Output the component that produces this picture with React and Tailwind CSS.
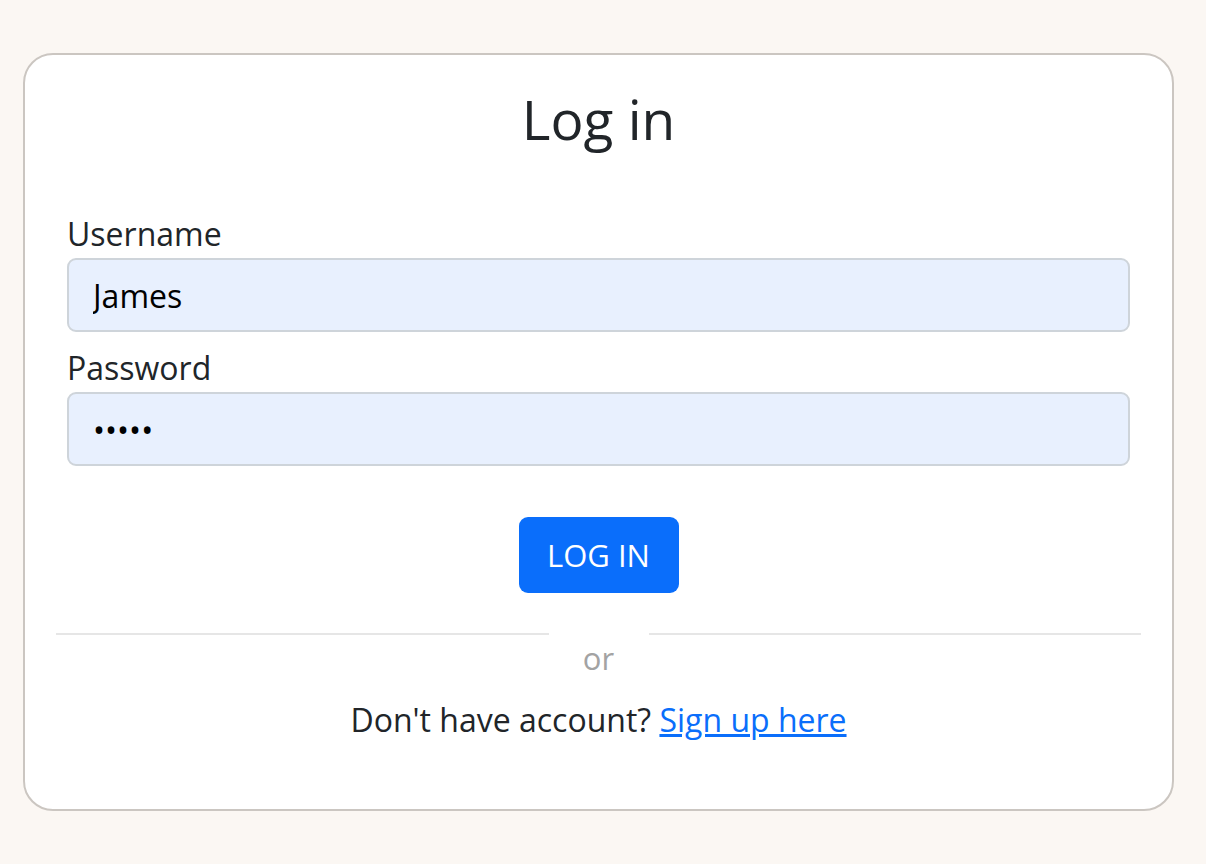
import React, { useState } from 'react';

const Field = ({ label, type = 'text', value, onChange, className = '' }) => (
    <div className={className}>
        <label className="block text-[32px] leading-[48px] text-[#212529]">{label}</label>
        <input
            type={type}
            value={value}
            onChange={(e) => onChange(e.target.value)}
            className="block w-full h-[74px] px-[24px] text-[32px] text-black bg-[#e8f0fe] border-2 border-[#ced4da] rounded-[9px] outline-none"
        />
    </div>
);

const App = () => {
    const [username, setUsername] = useState('James');
    const [password, setPassword] = useState('12345');

    return (
        <div className="min-h-[864px] bg-[#fbf7f3] pt-[53px] font-['Open_Sans',sans-serif]">
            <div className="ml-[23px] w-[1151px] bg-white border-2 border-[#cbc6c1] rounded-[30px] pt-[31px] pb-[65px]">
                <h1 className="text-center text-[55px] leading-[66px] text-[#212529]">Log in</h1>

                <form className="px-[42px] mt-[58px]" onSubmit={(e) => e.preventDefault()}>
                    <Field label="Username" value={username} onChange={setUsername} />
                    <Field label="Password" type="password" value={password} onChange={setPassword} className="mt-[12px]" />
                    <div className="flex justify-center mt-[51px]">
                        <button
                            type="submit"
                            className="h-[76px] w-[160px] bg-[#0a6efb] text-white text-[31px] rounded-[9px] uppercase"
                        >
                            Log in
                        </button>
                    </div>
                </form>

                <div className="flex px-[31px] mt-[40px]">
                    <div className="flex-1 h-[2px] bg-[#e6e6e6]" />
                    <div className="w-[100px]" />
                    <div className="flex-1 h-[2px] bg-[#e6e6e6]" />
                </div>
                <p className="text-center text-[31px] leading-[46px] text-[#a3a3a3]">or</p>
                <p className="mt-[15px] text-center text-[32px] leading-[48px] text-[#212529]">
                    Don't have account?{' '}
                    <a href="#" className="text-[#0a6efb] underline">Sign up here</a>
                </p>
            </div>
        </div>
    );
};

export default App;
